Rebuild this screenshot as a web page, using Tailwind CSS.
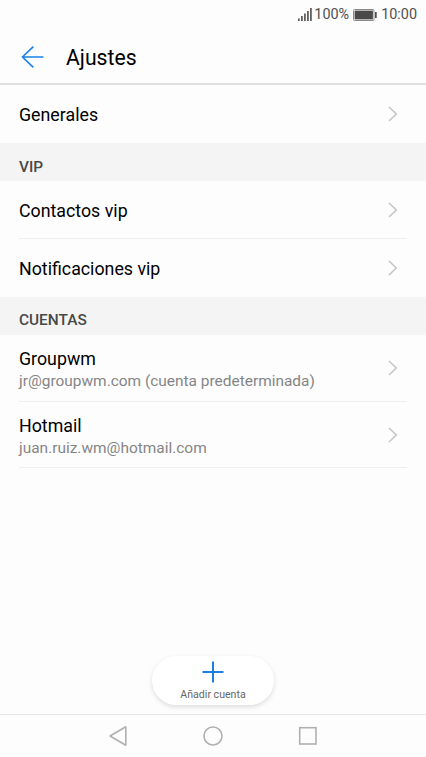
<!DOCTYPE html>
<html lang="es">
<head>
    <meta charset="UTF-8">
    <meta name="viewport" content="width=device-width, initial-scale=1.0">
    <title>Ajustes</title>
    <script src="https://cdn.jsdelivr.net/npm/@tailwindcss/browser@4"></script>
</head>
<body class="bg-[#fdfdfd] font-['Roboto',sans-serif] text-black">
<div class="w-[426px] h-[757px] flex flex-col overflow-hidden">
    <!-- Barra de estado -->
    <div class="h-[29px] shrink-0 flex items-center justify-end pr-[9px] text-[14.4px] leading-none text-[#505050]">
        <svg class="w-[14px] h-[13px] mr-[2px]" viewBox="0 0 14 13" fill="#606060">
            <rect x="0" y="10.5" width="1.8" height="2.5"/>
            <rect x="3" y="8" width="1.8" height="5"/>
            <rect x="6" y="5.5" width="1.8" height="7.5"/>
            <rect x="9" y="3" width="1.8" height="10"/>
            <rect x="12" y="0" width="1.8" height="13"/>
        </svg>
        <span class="pt-[2px]">100%</span>
        <svg class="w-[24px] h-[12px] ml-[4px] mr-[4px]" viewBox="0 0 24 12">
            <rect x="0.5" y="0.5" width="20.5" height="11" rx="1" fill="none" stroke="#8a8a8a"/>
            <rect x="1.6" y="1.6" width="18.3" height="8.8" fill="#4a4a4a"/>
            <rect x="22" y="3" width="1.7" height="6" fill="#505050"/>
        </svg>
        <span class="pt-[2px]">10:00</span>
    </div>

    <!-- Cabecera -->
    <header class="h-[56px] shrink-0 flex items-center pl-[21px] pt-[2px] border-b-2 border-[#e0e0e0]">
        <svg class="w-[23px] h-[22px] mr-[22px]" viewBox="0 0 23 22" fill="none" stroke="#1a80e6" stroke-width="1.6">
            <path d="M12.3 0.7L1.5 11L12.3 21.3M1.5 11H22.5"/>
        </svg>
        <h1 class="text-[21.2px] leading-6 pt-[2px]">Ajustes</h1>
    </header>

    <main class="flex-1">
        <a class="h-[58px] flex items-center justify-between pl-[19px] pr-[28px]">
            <span class="text-[17.8px] leading-6 pt-[2px]">Generales</span>
            <svg class="w-[10px] h-[16px]" viewBox="0 0 10 16" fill="none" stroke="#c6c6c6" stroke-width="1.6"><path d="M1 1L8.3 8L1 15"/></svg>
        </a>

        <h2 class="h-[38px] bg-[#f4f4f4] pl-[19px] pt-[14px] text-[15.4px] leading-5 font-medium text-[#484848]">VIP</h2>
        <a class="h-[58px] mx-[19px] pr-[9px] flex items-center justify-between border-b border-[#efefef]">
            <span class="text-[17.8px] leading-6 pt-[2px]">Contactos vip</span>
            <svg class="w-[10px] h-[16px]" viewBox="0 0 10 16" fill="none" stroke="#c6c6c6" stroke-width="1.6"><path d="M1 1L8.3 8L1 15"/></svg>
        </a>
        <a class="h-[58px] mx-[19px] pr-[9px] flex items-center justify-between">
            <span class="text-[17.8px] leading-6 pt-[2px]">Notificaciones vip</span>
            <svg class="w-[10px] h-[16px]" viewBox="0 0 10 16" fill="none" stroke="#c6c6c6" stroke-width="1.6"><path d="M1 1L8.3 8L1 15"/></svg>
        </a>

        <h2 class="h-[38px] bg-[#f4f4f4] pl-[19px] pt-[13px] text-[15.4px] leading-5 font-medium text-[#484848]">CUENTAS</h2>
        <a class="h-[67px] mx-[19px] pr-[9px] flex items-center justify-between border-b border-[#efefef]">
            <div class="pt-px">
                <div class="text-[17.8px] leading-6">Groupwm</div>
                <div class="text-[15.45px] leading-5 text-[#858585]">jr@groupwm.com (cuenta predeterminada)</div>
            </div>
            <svg class="w-[10px] h-[16px]" viewBox="0 0 10 16" fill="none" stroke="#c6c6c6" stroke-width="1.6"><path d="M1 1L8.3 8L1 15"/></svg>
        </a>
        <a class="h-[66px] mx-[19px] pr-[9px] flex items-center justify-between border-b border-[#efefef]">
            <div class="pt-[2px]">
                <div class="text-[17.8px] leading-6">Hotmail</div>
                <div class="text-[15.45px] leading-5 text-[#858585]">juan.ruiz.wm@hotmail.com</div>
            </div>
            <svg class="w-[10px] h-[16px]" viewBox="0 0 10 16" fill="none" stroke="#c6c6c6" stroke-width="1.6"><path d="M1 1L8.3 8L1 15"/></svg>
        </a>
    </main>

    <button class="w-[122px] h-[49px] mb-[9px] shrink-0 self-center rounded-full bg-white shadow-[0_2px_5px_rgba(0,0,0,0.13)] flex flex-col items-center pt-[5px]">
        <svg class="w-[22px] h-[22px]" viewBox="0 0 22 22" fill="none" stroke="#1a80e6" stroke-width="2"><path d="M11 0.5V21.5M0.5 11H21.5"/></svg>
        <span class="text-[10.6px] leading-3 mt-[6px] text-[#666666]">Añadir cuenta</span>
    </button>

    <!-- Barra de navegación -->
    <nav class="h-[43px] shrink-0 flex items-center justify-center gap-[75px] border-t border-[#e6e6e6]">
        <svg class="w-[20px] h-[22px]" viewBox="0 0 20 22" fill="none" stroke="#b0b0b0" stroke-width="1.6" stroke-linejoin="round"><path d="M17.8 1.8V20.2L2 11Z"/></svg>
        <svg class="w-[20px] h-[20px]" viewBox="0 0 20 20" fill="none" stroke="#b0b0b0" stroke-width="1.6"><circle cx="10" cy="10" r="9"/></svg>
        <svg class="w-[20px] h-[20px]" viewBox="0 0 20 20" fill="none" stroke="#b0b0b0" stroke-width="1.6"><rect x="1.7" y="1.7" width="16.3" height="16.3"/></svg>
    </nav>
</div>
</body>
</html>
